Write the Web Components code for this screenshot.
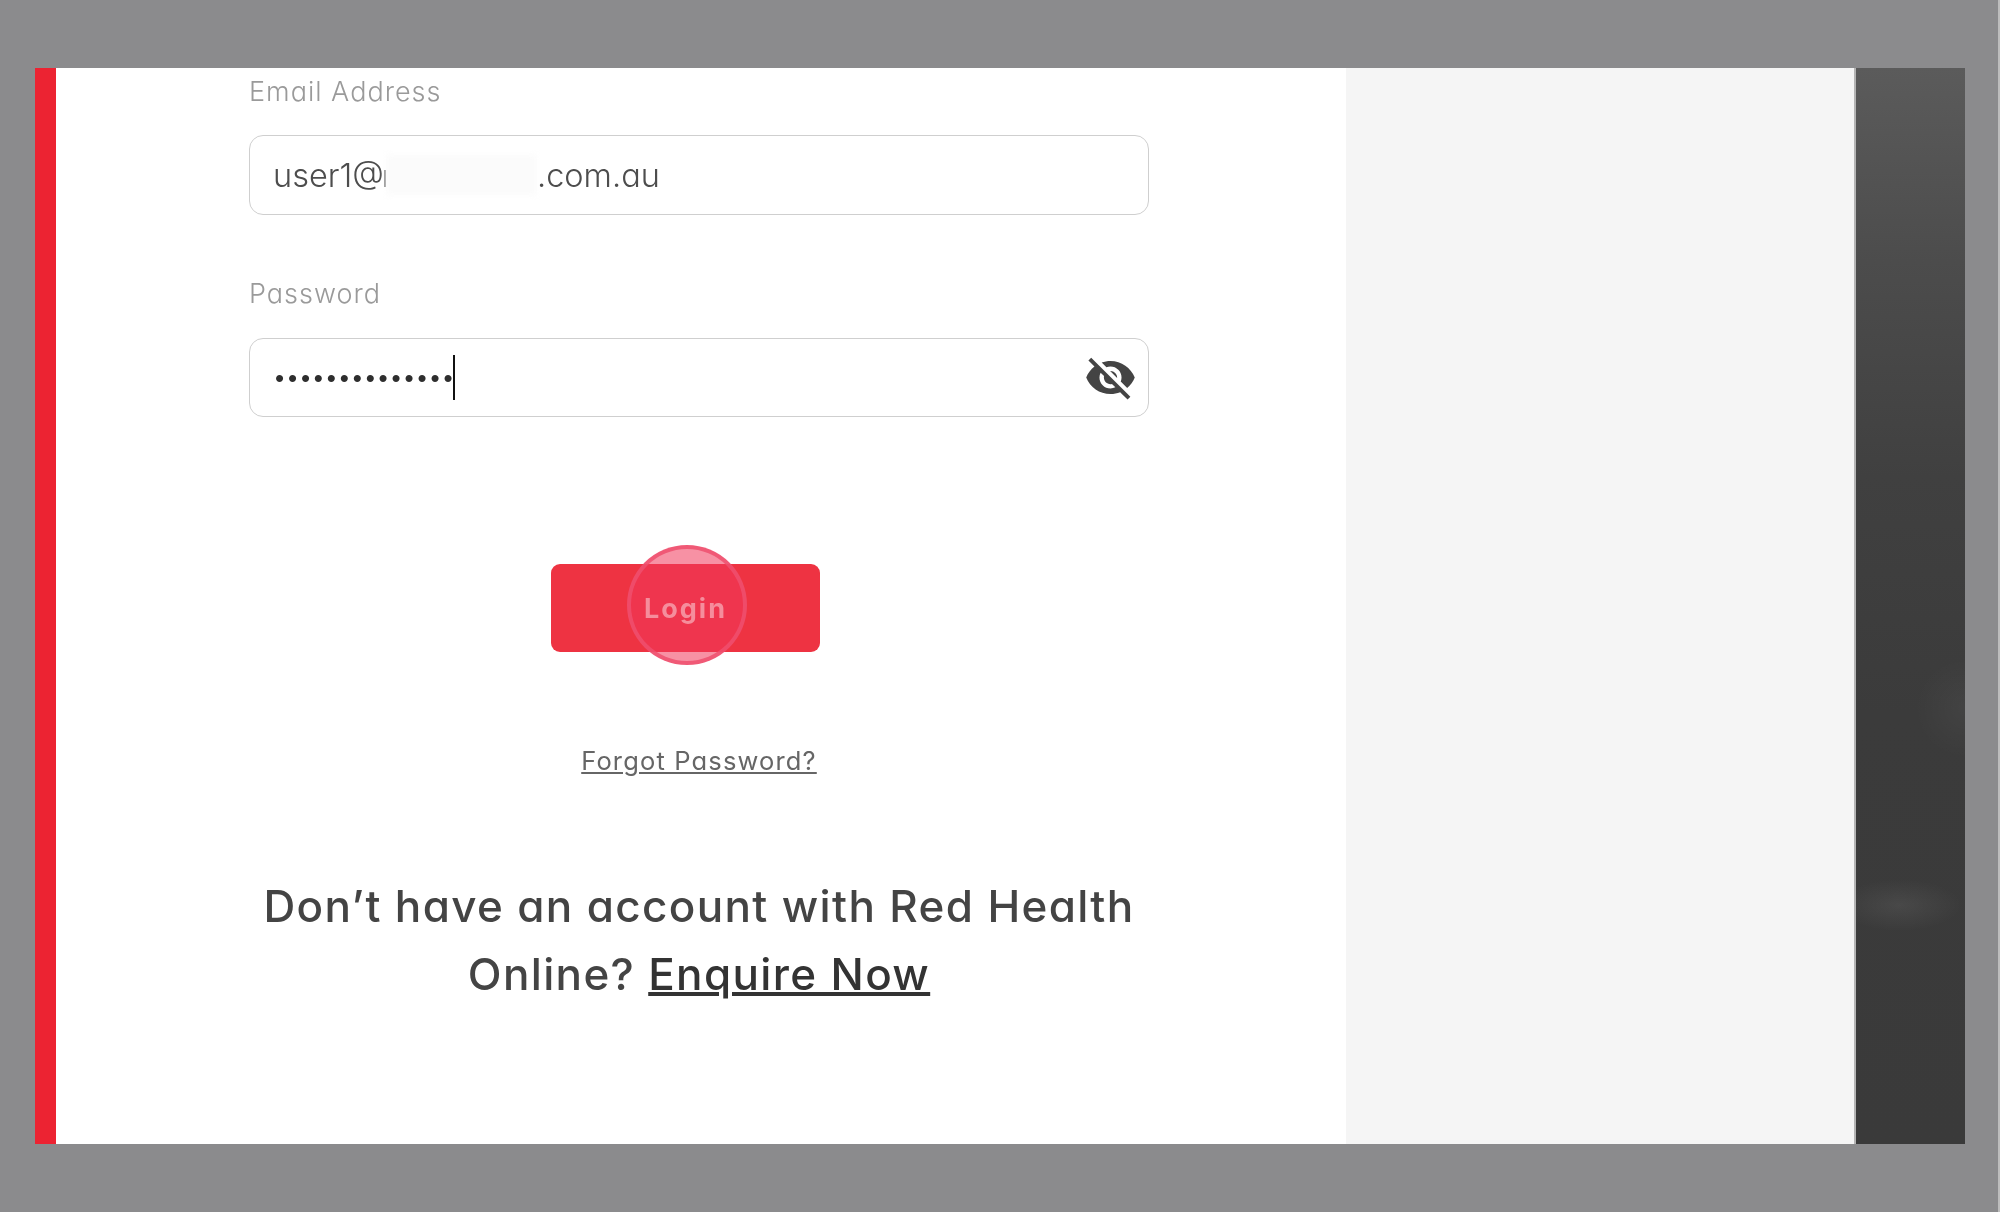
<!DOCTYPE html>
<html lang="en"><head><meta charset="utf-8"><title>Red Health Online Login</title>
<style>
html,body{margin:0;padding:0;height:100%;background:#8b8b8d}
body{font-family:Inter,"Noto Sans",sans-serif;font-feature-settings:"cv11" 1}
</style></head><body>
<login-shell>
  <form-field label="Email Address"></form-field>
  <form-field label="Password" type="password"></form-field>
  <ripple-button>Login</ripple-button>
  <forgot-link>Forgot Password?</forgot-link>
  <enquire-note></enquire-note>
</login-shell>
<script>
const make=(name,html)=>customElements.define(name,class extends HTMLElement{
  connectedCallback(){ if(this.shadowRoot) return; const r=this.attachShadow({mode:'open'}); r.innerHTML=html(this); }
});
make('login-shell',()=>`<style>
:host{display:block;box-sizing:border-box;height:1212px;padding:68px 35px;box-shadow:inset -2px 0 #bdbdbd}
.frame{display:flex;height:1076px;overflow:hidden}
.stripe{width:21px;background:#ec2332;flex:none}
.form{width:1290px;flex:none;box-sizing:border-box;background:#fff;padding:9px 197px 0 193px;display:flex;flex-direction:column}
.side{width:508px;flex:none;background:#f5f5f5}
.rule{width:2px;flex:none;background:#b4b4b4}
.dark{flex:1;background:
 radial-gradient(ellipse 62px 26px at 40% 77.8%,rgba(255,255,255,.07),transparent),
 radial-gradient(ellipse 50px 50px at 100% 59.5%,rgba(255,255,255,.04),transparent),
 linear-gradient(#5b5b5b 0,#4c4c4c 18%,#404040 38%,#3b3b3b 60%,#3a3a3a 100%)}
</style><div class="frame"><div class="stripe"></div><div class="form"><slot></slot></div><div class="side"></div><div class="rule"></div><div class="dark"></div></div>`);
make('form-field',(h)=>{const pw=h.getAttribute('type')==='password';return `<style>
:host{display:block;margin-bottom:64px;color:#555}
:host([type=password]){margin-bottom:0}
.label{font-size:27px;letter-spacing:1px;line-height:30px;color:#9a9a9a;font-weight:300;filter:blur(.5px);margin-bottom:28px}
:host([type=password]) .label{margin-bottom:29px}
.box{box-sizing:border-box;height:80px;border:1.5px solid #cfcfcf;border-radius:14px;display:flex;align-items:center;padding-left:23px;background:#fff}
:host([type=password]) .box{height:79px}
.txt{font-size:32.5px;font-weight:300;color:#4d4d4d;filter:blur(.5px);white-space:nowrap}
.head{width:113px;flex:none;display:flex;align-items:center;justify-content:space-between}
.sliver{width:2px;height:17px;margin-top:6px;background:#777;flex:none;filter:blur(.4px)}
.mask{width:151px;height:40px;background:#fbfbfb;flex:none;filter:blur(3px)}
.dots{font:26px "Liberation Sans",sans-serif;letter-spacing:3.85px;color:#2e2e2e;margin-left:2px;filter:blur(.4px);line-height:1}
.caret{width:2px;height:45px;background:#111;margin-left:-3px;flex:none}
svg{margin-left:auto;margin-right:11px;flex:none;filter:blur(.6px)}
</style><div class="label">${h.getAttribute('label')}</div><div class="box">${pw?`<span class="dots">••••••••••••••</span><span class="caret"></span>
<svg width="53" height="53" viewBox="0 0 24 24" fill="#444"><path d="M12 7c2.76 0 5 2.24 5 5 0 .65-.13 1.26-.36 1.83l2.92 2.92c1.51-1.26 2.7-2.89 3.43-4.75-1.73-4.39-6-7.5-11-7.5-1.4 0-2.74.25-3.98.7l2.16 2.16C10.74 7.13 11.35 7 12 7zM2 4.27l2.28 2.28.46.46C3.08 8.3 1.78 10.02 1 12c1.73 4.39 6 7.5 11 7.5 1.55 0 3.03-.3 4.38-.84l.42.42L19.73 22 21 20.73 3.27 3 2 4.27zM7.53 9.8l1.55 1.55c-.05.21-.08.43-.08.65 0 1.66 1.34 3 3 3 .22 0 .44-.03.65-.08l1.55 1.55c-.67.33-1.41.53-2.2.53-2.76 0-5-2.24-5-5 0-.79.2-1.53.53-2.2zm4.31-.78l3.15 3.15.02-.16c0-1.66-1.34-3-3-3l-.17.01z"/></svg>`:`<span class="head"><span class="txt">user1@</span><span class="sliver"></span></span><span class="mask"></span><span class="txt">.com.au</span>`}</div>`});
make('ripple-button',()=>`<style>
:host{display:block;width:269px;height:88px;margin:147px 0 0 302px;position:relative;background:#ee3342;border-radius:9px;color:#f58d9c;font-weight:700;font-size:27px;letter-spacing:2px}
.t{position:relative;display:flex;height:100%;align-items:center;justify-content:center;filter:blur(.5px)}
.r{position:absolute;left:76px;top:-19px;width:120px;height:120px;box-sizing:border-box;border-radius:50%;border:4px solid rgba(238,80,110,.85);background:rgba(241,55,90,.55)}
</style><span class="r"></span><span class="t"><slot></slot></span>`);
make('forgot-link',()=>`<style>
:host{display:block;margin-top:91px;text-align:center;font-size:25.5px;letter-spacing:1.15px;line-height:36px;color:#666;font-weight:400}
a{color:inherit;filter:blur(.4px);display:inline-block;text-decoration:underline}
</style><a><slot></slot></a>`);
make('enquire-note',()=>`<style>
:host{display:block;margin-top:93px;text-align:center;font-size:44px;letter-spacing:1.35px;line-height:68px;color:#444;font-weight:500}
div{filter:blur(.5px)}
a{color:#333;text-decoration:underline;text-decoration-thickness:3.5px}
</style><div>Don’t have an account with Red Health<br>Online? <a>Enquire Now</a></div>`);
</script>
</body></html>
